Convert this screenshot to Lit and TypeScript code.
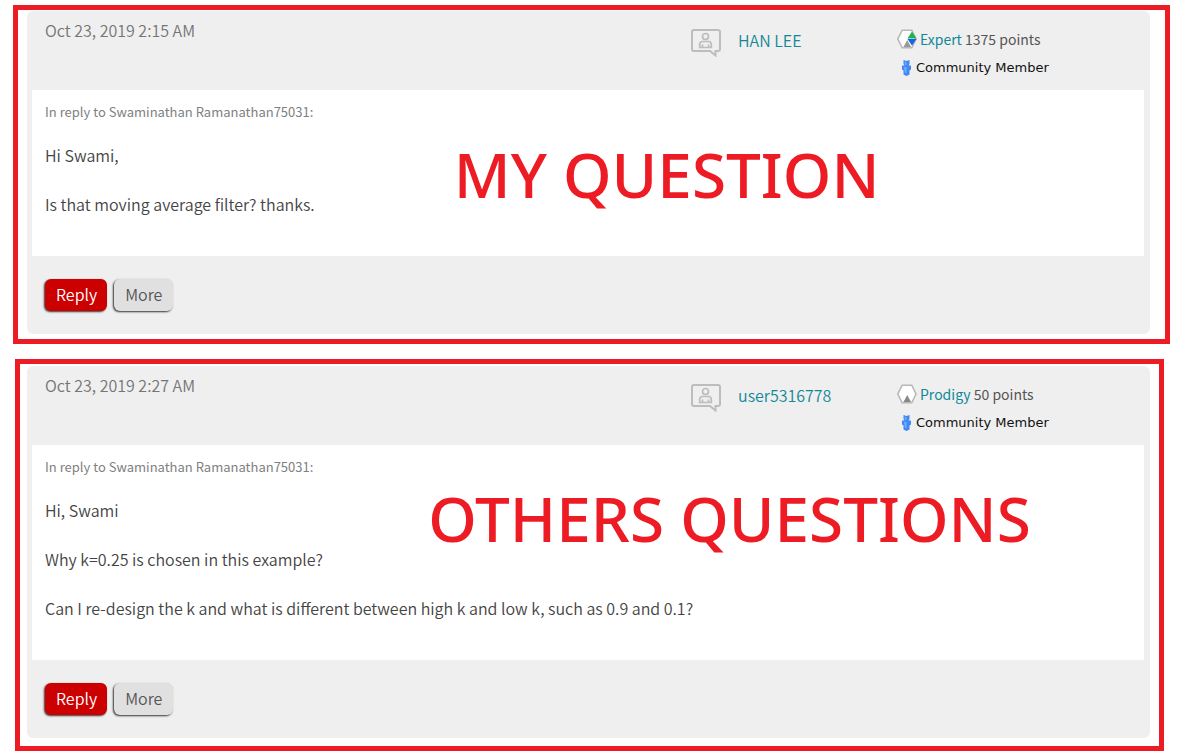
import { LitElement, html, css, svg, nothing } from "lit";
import { customElement, property } from "lit/decorators.js";

interface Post {
  date: string;
  user: string;
  rank: string;
  points: number;
  replyTo: string;
  lines: string[];
  note: string;
}

const POSTS: Post[] = [
  {
    date: "Oct 23, 2019 2:15 AM",
    user: "HAN LEE",
    rank: "Expert",
    points: 1375,
    replyTo: "Swaminathan Ramanathan75031",
    lines: ["Hi Swami,", "Is that moving average filter? thanks."],
    note: "MY QUESTION",
  },
  {
    date: "Oct 23, 2019 2:27 AM",
    user: "user5316778",
    rank: "Prodigy",
    points: 50,
    replyTo: "Swaminathan Ramanathan75031",
    lines: [
      "Hi, Swami",
      "Why k=0.25 is chosen in this example?",
      "Can I re-design the k and what is different between high k and low k, such as 0.9 and 0.1?",
    ],
    note: "OTHERS QUESTIONS",
  },
];

@customElement("forum-post")
export class ForumPost extends LitElement {
  @property({ attribute: false }) post!: Post;

  static styles = css`
    :host {
      display: block;
      position: relative;
      background: #efefef;
      border-radius: 6px;
      font: 350 16px/24px "Noto Sans CJK SC DemiLight", "Noto Sans CJK SC", sans-serif;
      color: #444;
    }
    .head {
      display: grid;
      grid-template-columns: 1fr 206px 253px;
      height: 79px;
      padding-left: 18px;
      box-sizing: border-box;
    }
    .date {
      padding-top: 7px;
      color: #757575;
    }
    .author {
      display: flex;
      align-items: flex-start;
      gap: 17px;
      padding-top: 17px;
    }
    .author svg {
      margin-top: 1px;
    }
    .badges {
      padding-top: 16px;
    }
    .rank {
      display: flex;
      align-items: center;
      gap: 3px;
      font: 400 14px/24px "Noto Sans CJK SC", sans-serif;
      color: #555;
    }
    .member {
      display: flex;
      align-items: center;
      gap: 4px;
      padding: 5px 0 0 4px;
      font: 13px/24px "DejaVu Sans", sans-serif;
      color: #111;
    }
    a {
      color: #118899;
      text-decoration: none;
    }
    svg {
      display: block;
      flex: none;
    }
    .body {
      background: #fff;
      margin: 0 6px 0 5px;
      padding: 10px 13px 40px;
    }
    .reply-to {
      font: 400 13px/24px "Noto Sans CJK SC", sans-serif;
      color: #808080;
    }
    p {
      margin: 0;
    }
    .line {
      margin-top: 25px;
    }
    .reply-to + .line {
      margin-top: 19px;
    }
    .foot {
      display: flex;
      gap: 7px;
      padding: 23px 18px;
    }
    button {
      height: 32px;
      border: 0;
      border-radius: 6px;
      padding: 0 11px 2px;
      font: inherit;
      background: #e0e0e0;
      color: #555;
      box-shadow: -1px 1px 2px #333;
    }
    .primary {
      padding: 0 10px 2px 11px;
      background: #c00;
      color: #fff;
    }
    .note {
      position: absolute;
      font: 500 62px/80px "Noto Sans", sans-serif;
      color: #ed1c24;
      white-space: nowrap;
      left: 38%;
      top: 123px;
    }
    .note.long {
      left: calc(36% - 3px);
      top: 112px;
    }
  `;

  private hexagon() {
    const expert = this.post.rank === "Expert";
    return html`<svg width="20" height="20" viewBox="0 0 20 20" aria-hidden="true">
      <path d="M5.2 1.200h9.600L19 10l-4.200 8.800H5.200L.8 10z" fill="#fff" stroke="#b8b8b8" stroke-width="1.600" />
      ${expert
        ? svg`<path d="M10.500 9.500 15 2.500 19.500 9.500z" fill="#22b14c" />
            <path d="M10.500 10h9L15 16.500z" fill="#1464e6" />
            <path d="M6.500 18 10.200 11 14 18z" fill="#999" />`
        : svg`<path d="M6.500 18 10.200 11 14 18z" fill="#888" />`}
    </svg>`;
  }

  render() {
    const p = this.post;
    if (!p) return nothing;
    return html`
      <div class="head">
        <div class="date">${p.date}</div>
        <div class="author">
          <svg width="30" height="28" viewBox="0 0 30 28" fill="none" stroke="#bdbdbd" aria-hidden="true">
            <path d="M3 1h24q2 0 2 2v17q0 2-2 2h-2.500v4.500L19 22H3q-2 0-2-2V3q0-2 2-2z" stroke-width="2" />
            <circle cx="14.500" cy="7.500" r="3" stroke-width="1.700" />
            <path d="M8.700 18.500v-3q0-3 3-3h5.600q3 0 3 3v3zM11.500 18.500v-3M17.500 18.500v-3" stroke-width="1.700" />
          </svg>
          <a href="#">${p.user}</a>
        </div>
        <div class="badges">
          <div class="rank">${this.hexagon()}<span><a href="#">${p.rank}</a> ${p.points} points</span></div>
          <div class="member">
            <svg width="11" height="16" viewBox="0 0 11 16" aria-hidden="true">
              <path d="M2.500 0 5.500 1 8.500 0v4L7.500 5.500H10v4L8.500 10.500v4l-3 1.500-3-1.500v-4L1 9.500v-4h2.500L2.500 4z" fill="#3f88f5" />
              <path d="M3.500 1.500 5.500 2.500v2.500h-1.500zM3 7h2.500v6H4z" fill="#74adff" />
            </svg>
            <span>Community Member</span>
          </div>
        </div>
      </div>
      <div class="body">
        <p class="reply-to">In reply to ${p.replyTo}:</p>
        ${p.lines.map((l) => html`<p class="line">${l}</p>`)}
      </div>
      <div class="foot">
        <button class="primary" type="button">Reply</button>
        <button type="button">More</button>
      </div>
      <div class="note ${p.lines.length > 2 ? "long" : ""}">${p.note}</div>
    `;
  }
}

@customElement("app-root")
export class AppRoot extends LitElement {
  static styles = css`
    :host {
      display: flow-root;
      background: #fff;
    }
    .frame {
      border: 5px solid #ed1c24;
    }
    .first {
      margin: 5px 9px 15px 13px;
      padding: 1px 15px 5px 9px;
    }
    .second {
      margin: 0 15px 5px 15px;
      padding: 2px 9px 8px 7px;
    }
  `;

  render() {
    return html`
      <div class="frame first"><forum-post .post=${POSTS[0]}></forum-post></div>
      <div class="frame second"><forum-post .post=${POSTS[1]}></forum-post></div>
    `;
  }
}
